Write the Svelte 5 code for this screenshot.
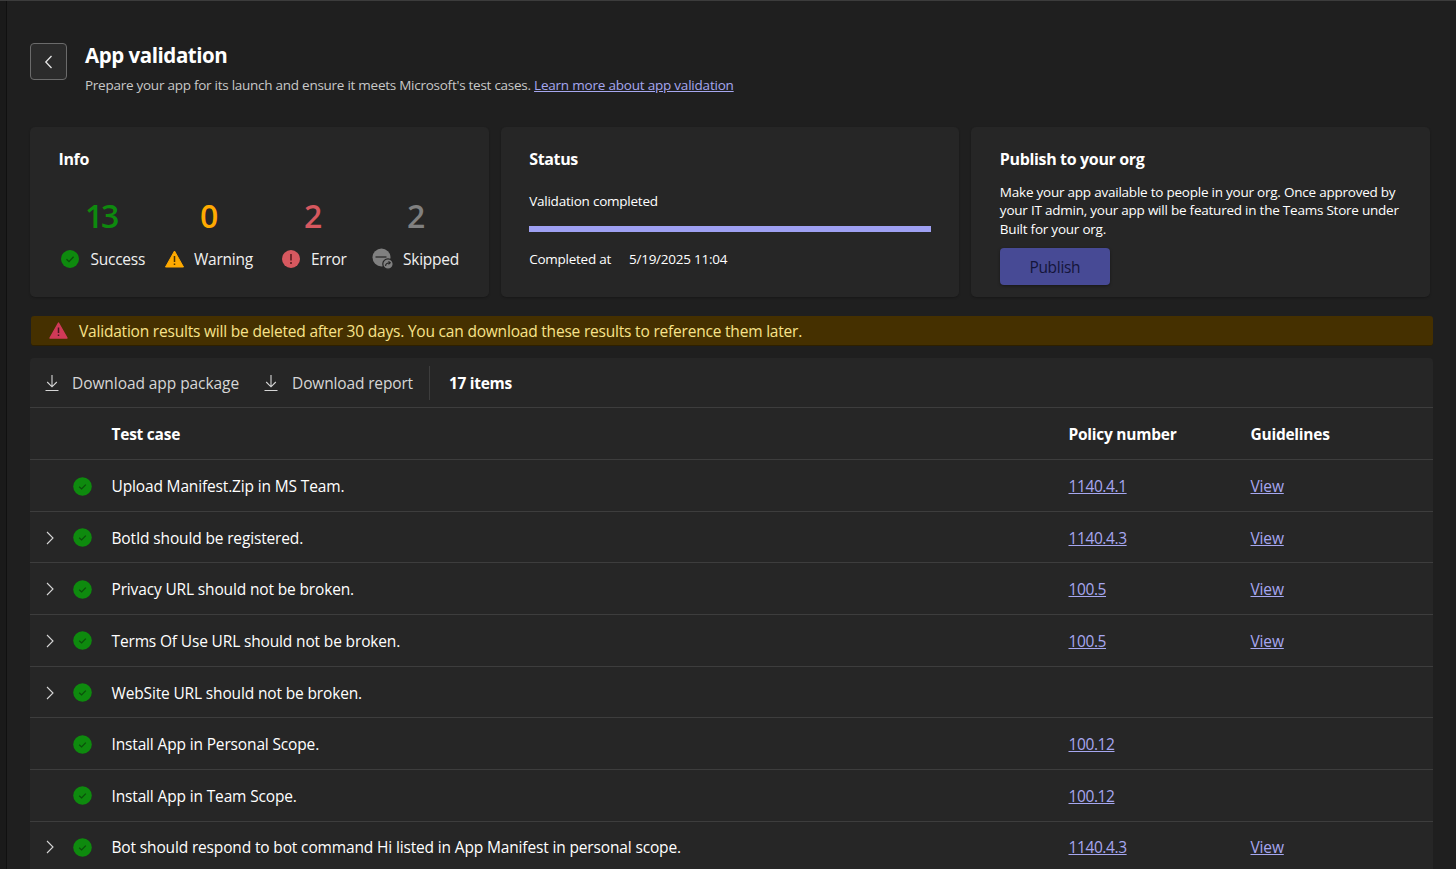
<script>
  const rows = [
    { name: 'Upload Manifest.Zip in MS Team.', policy: '1140.4.1', view: true, exp: false },
    { name: 'BotId should be registered.', policy: '1140.4.3', view: true, exp: true },
    { name: 'Privacy URL should not be broken.', policy: '100.5', view: true, exp: true },
    { name: 'Terms Of Use URL should not be broken.', policy: '100.5', view: true, exp: true },
    { name: 'WebSite URL should not be broken.', policy: '', view: false, exp: true },
    { name: 'Install App in Personal Scope.', policy: '100.12', view: false, exp: false },
    { name: 'Install App in Team Scope.', policy: '100.12', view: false, exp: false },
    { name: 'Bot should respond to bot command Hi listed in App Manifest in personal scope.', policy: '1140.4.3', view: true, exp: true }
  ];
</script>

<div class="shell">
  <div class="rail"></div>
  <main class="main">
    <header class="head">
      <button class="back" aria-label="Back">
        <svg width="16" height="16" viewBox="0 0 16 16"><path d="M10.5 2 L4.8 8 L10.5 14" fill="none" stroke="#e6e6e6" stroke-width="1.3"/></svg>
      </button>
      <div>
        <h1>App validation</h1>
        <p class="sub">Prepare your app for its launch and ensure it meets Microsoft's test cases. <a href="#a">Learn more about app validation</a></p>
      </div>
    </header>

    <section class="cards">
      <div class="card">
        <h2>Info</h2>
        <div class="stats">
          <div class="stat s1">
            <div class="num green">13</div>
            <div class="lab">
              <svg width="18" height="18" viewBox="0 0 18 18"><circle cx="9" cy="9" r="9" fill="#0e8a0e"/><path d="M5.5 9.2 L8 11.6 L12.6 6.8" fill="none" stroke="#0b4f0b" stroke-width="1.3"/></svg>
              <span>Success</span>
            </div>
          </div>
          <div class="stat s2">
            <div class="num amber">0</div>
            <div class="lab">
              <svg width="19" height="18" viewBox="0 0 19 18"><path d="M9.5 1 L18.5 17 L0.5 17 Z" fill="#ffaa00" stroke="#ffaa00" stroke-linejoin="round"/><path d="M9.5 6 V12 M9.5 13.5 V15" stroke="#4a3300" stroke-width="1.5"/></svg>
              <span>Warning</span>
            </div>
          </div>
          <div class="stat s3">
            <div class="num red">2</div>
            <div class="lab">
              <svg width="18" height="18" viewBox="0 0 18 18"><circle cx="9" cy="9" r="9" fill="#d6585f"/><path d="M9 4 V10.5 M9 12 V14" stroke="#5a1d20" stroke-width="1.6"/></svg>
              <span>Error</span>
            </div>
          </div>
          <div class="stat s4">
            <div class="num gray">2</div>
            <div class="lab">
              <svg width="22" height="22" viewBox="0 0 22 22"><circle cx="9.5" cy="9.5" r="9" fill="#808080"/><path d="M3.5 9 H14.5" stroke="#2a2a2a" stroke-width="1.3"/><circle cx="16" cy="16" r="5.2" fill="#808080" stroke="#242424" stroke-width="1.2"/><path d="M13.6 18 C13.6 15.5 15 14.8 18 14.8 M16.5 13.3 L18.3 14.8 L16.5 16.4" fill="none" stroke="#242424" stroke-width="1.1"/></svg>
              <span>Skipped</span>
            </div>
          </div>
        </div>
      </div>

      <div class="card">
        <h2>Status</h2>
        <div class="vc">Validation completed</div>
        <div class="bar"></div>
        <div class="done"><span>Completed at</span><span>5/19/2025 11:04</span></div>
      </div>

      <div class="card">
        <h2>Publish to your org</h2>
        <p class="desc">Make your app available to people in your org. Once approved by your IT admin, your app will be featured in the Teams Store under Built for your org.</p>
        <button class="pub">Publish</button>
      </div>
    </section>

    <div class="banner">
      <svg width="19" height="17" viewBox="0 0 19 17"><path d="M9.5 1 L18 16 L1 16 Z" fill="#d13a58" stroke="#d13a58" stroke-width="1.4" stroke-linejoin="round"/><path d="M9.5 5.5 V11 M9.5 12.4 V14" stroke="#4a1420" stroke-width="1.5"/></svg>
      <span>Validation results will be deleted after 30 days. You can download these results to reference them later.</span>
    </div>

    <section class="table">
      <div class="tools">
        <button class="tool">
          <svg width="16" height="18" viewBox="0 0 16 18"><path d="M8 1 V12.5 M3.2 8 L8 12.8 L12.8 8 M1.5 16.5 H14.5" fill="none" stroke="#d6d6d6" stroke-width="1.1"/></svg>
          <span>Download app package</span>
        </button>
        <button class="tool second">
          <svg width="16" height="18" viewBox="0 0 16 18"><path d="M8 1 V12.5 M3.2 8 L8 12.8 L12.8 8 M1.5 16.5 H14.5" fill="none" stroke="#d6d6d6" stroke-width="1.1"/></svg>
          <span>Download report</span>
        </button>
        <div class="divider"></div>
        <strong class="count">17 items</strong>
      </div>
      <div class="row hdr">
        <span></span><span></span>
        <span>Test case</span><span>Policy number</span><span>Guidelines</span>
      </div>
      {#each rows as r}
        <div class="row">
          <span class="exp">
            {#if r.exp}
              <svg width="10" height="14" viewBox="0 0 10 14"><path d="M2 1 L8 7 L2 13" fill="none" stroke="#d6d6d6" stroke-width="1.1"/></svg>
            {/if}
          </span>
          <span class="ok">
            <svg width="19" height="19" viewBox="0 0 19 19"><circle cx="9.5" cy="9.5" r="9.3" fill="#0e8a0e"/><path d="M6.2 9.8 L8.6 12 L12.8 7.6" fill="none" stroke="#0b4f0b" stroke-width="1.2"/></svg>
          </span>
          <span>{r.name}</span>
          <span>{#if r.policy}<a class="pol" href="#p">{r.policy}</a>{/if}</span>
          <span>{#if r.view}<a href="#v">View</a>{/if}</span>
        </div>
      {/each}
    </section>
  </main>
</div>

<style>
  :global(body) {
    margin: 0;
    background: #1f1f1f;
    overflow: hidden;
  }
  .shell {
    display: flex;
    height: 869px;
    overflow: hidden;
    border-top: 1px solid #3c3c3c;
    box-sizing: border-box;
    font-family: "Open Sans", "Noto Sans", sans-serif;
    color: #fff;
    font-size: 14px;
  }
  .rail {
    width: 6px;
    flex: none;
    background: #1a1a1a;
    border-right: 1px solid #101010;
  }
  .main {
    flex: 1;
    min-width: 0;
    padding: 41px 23px 0 23px;
  }
  .head {
    display: flex;
    gap: 18px;
    height: 85px;
  }
  .back {
    width: 37px;
    height: 37px;
    margin-top: 1px;
    background: #2b2b2b;
    border: 1px solid #6b6b6b;
    border-radius: 4px;
    display: flex;
    align-items: center;
    justify-content: center;
    padding: 0;
    box-sizing: border-box;
  }
  h1 {
    margin: 0;
    font-size: 20.5px;
    line-height: 26px;
    font-weight: 700;
    letter-spacing: -0.45px;
  }
  .sub {
    margin: 8px 0 0;
    font-size: 13.5px;
    line-height: 18px;
    color: #c8c8c8;
    letter-spacing: -0.26px;
  }
  .sub a { letter-spacing: -0.21px; }
  a { color: #a6a7f0; text-decoration: underline; }
  .cards {
    display: flex;
    gap: 12px;
    width: 1400px;
  }
  .card {
    flex: 1;
    height: 170px;
    box-sizing: border-box;
    background: #262626;
    border-radius: 5px;
    padding: 22px 28.5px 0;
    box-shadow: 0 1px 2px rgba(0,0,0,.25);
    min-width: 0;
  }
  h2 {
    margin: 0;
    font-size: 16px;
    line-height: 20px;
    font-weight: 700;
    letter-spacing: -0.35px;
  }
  .stats { position: relative; height: 100px; }
  .stat { position: absolute; top: 28px; }
  .s1 { left: -0.5px; }
  .s2 { left: 105.5px; }
  .s3 { left: 223.5px; }
  .s4 { left: 312.5px; }
  .num {
    font-size: 32px;
    line-height: 38px;
    text-align: center;
    letter-spacing: -2.2px;
    height: 50px;
    font-weight: 600;
  }
  .s1 .num { margin-left: -2px; width: 90px; }
  .s2 .num { width: 88px; }
  .s3 .num { width: 60px; }
  .s4 .num { width: 88px; }
  .green { color: #0e8a0e; }
  .amber { color: #ffaa00; }
  .red { color: #d6585f; }
  .gray { color: #808080; }
  .lab {
    display: flex;
    align-items: center;
    font-size: 15.5px;
    letter-spacing: -0.25px;
    height: 24px;
    white-space: nowrap;
    margin-left: 3px;
    color: #f0f0f0;
  }
  .s2 .lab { margin-left: 1px; }
  .s3 .lab { margin-left: 0; }
  .s4 .lab { margin-left: 1px; }
  .lab span { margin-left: 11.5px; }
  .s2 .lab span { margin-left: 10px; }
  .s3 .lab span { margin-left: 11px; }
  .s4 .lab span { margin-left: 9px; }
  .vc {
    margin-top: 23px;
    font-size: 13.5px;
    line-height: 18px;
    letter-spacing: -0.23px;
  }
  .bar {
    margin-top: 16px;
    height: 6px;
    background: #9ea0f2;
  }
  .done {
    margin-top: 18px;
    display: flex;
    gap: 18px;
    font-size: 13.5px;
    line-height: 18px;
    letter-spacing: -0.25px;
  }
  .desc {
    margin: 14px 0 0;
    font-size: 13.5px;
    line-height: 18.4px;
    letter-spacing: -0.23px;
  }
  .pub {
    display: block;
    margin-top: 10px;
    width: 110px;
    height: 37px;
    background: #474a95;
    border: 0;
    border-radius: 4px;
    color: #14153a;
    font: inherit;
    font-size: 15.5px;
    letter-spacing: -0.3px;
    box-shadow: 0 1px 3px rgba(0,0,0,.4);
  }
  .banner {
    width: 1402px;
    margin: 19px 0 0 1px;
    height: 30px;
    box-sizing: border-box;
    background: #453000;
    border-bottom: 1px solid #2e2000;
    border-radius: 3px;
    display: flex;
    align-items: center;
    gap: 11px;
    padding-left: 18px;
    color: #f8e38a;
    font-size: 15.5px;
    letter-spacing: -0.2px;
    white-space: nowrap;
  }
  .table {
    width: 1403px;
    margin-top: 12px;
    background: #262626;
    border-radius: 4px 4px 0 0;
  }
  .tools {
    height: 49px;
    display: flex;
    align-items: center;
    border-bottom: 1px solid #3d3d3d;
  }
  .tool {
    display: flex;
    align-items: center;
    gap: 12px;
    margin-left: 14px;
    background: none;
    border: 0;
    padding: 0;
    color: #d6d6d6;
    font: inherit;
    font-size: 15.5px;
    letter-spacing: -0.07px;
    white-space: nowrap;
  }
  .tool.second { margin-left: 24px; gap: 13px; letter-spacing: -0.15px; }
  .divider {
    width: 1px;
    height: 34px;
    background: #3d3d3d;
    margin-left: 16px;
  }
  .count {
    margin-left: 19px;
    font-size: 15.5px;
    font-weight: 700;
    letter-spacing: -0.3px;
  }
  .row {
    display: grid;
    grid-template-columns: 32px 49.5px 957px 182px 1fr;
    align-items: center;
    height: 51.65px;
    box-sizing: border-box;
    border-bottom: 1px solid #3d3d3d;
    padding-top: 1px;
    font-size: 15.5px;
    letter-spacing: -0.15px;
    white-space: nowrap;
  }
  .row.hdr { font-weight: 700; letter-spacing: -0.25px; height: 52.2px; }
  .pol { letter-spacing: -0.4px; }
  .exp { display: flex; padding-left: 15px; }
  .ok { display: flex; padding-left: 11px; }
</style>
